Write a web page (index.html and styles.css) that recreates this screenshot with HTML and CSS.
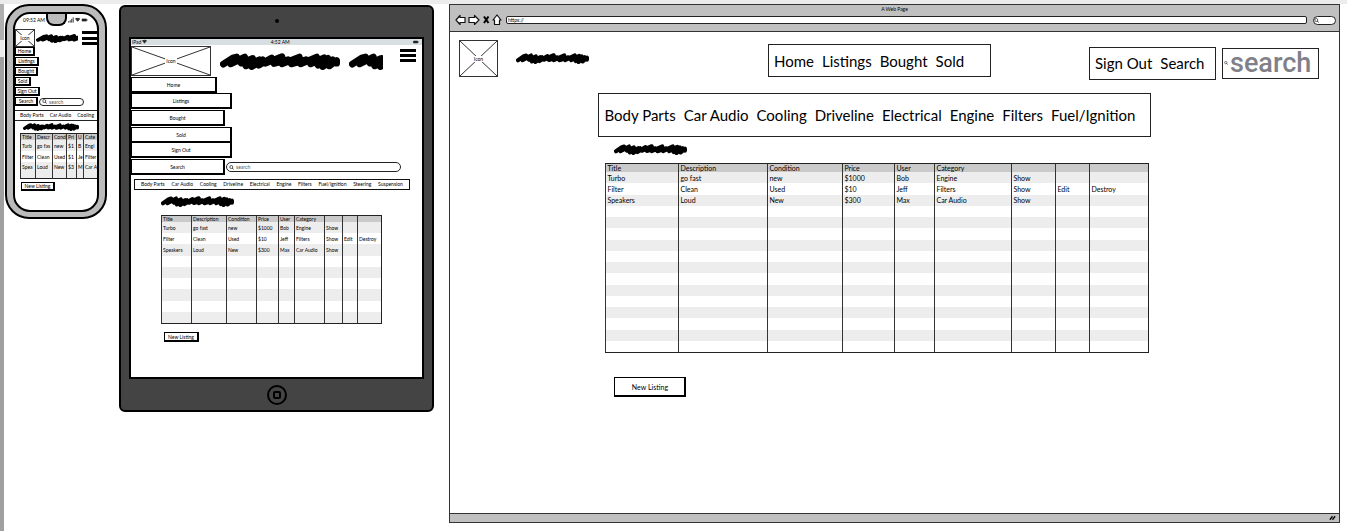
FILE: index.html
```html
<!DOCTYPE html>
<html lang="en">
<head>
<meta charset="utf-8">
<title>Car parts wireframes</title>
<link rel="stylesheet" href="styles.css">
</head>
<body>
<svg class="defs" aria-hidden="true">
  <symbol id="scribble" viewBox="0 0 360 50" preserveAspectRatio="none"><path d="M10 33 38 15 50 12 32 32 74 12 64 30 98 16 78 38 118 20 95 40 128 20 116 36 155 15 137 30 186 11 162 31 204 20 186 32 238 12 214 32 258 20 242 32 290 12 272 32 312 14 294 36 324 16 308 40 338 20 328 38 350 22 350 30" fill="none" stroke="#000" stroke-width="20" stroke-linecap="round" stroke-linejoin="round"/></symbol>
  <symbol id="cross" viewBox="0 0 100 100" preserveAspectRatio="none"><path d="M0 0 100 100M100 0 0 100" stroke="#333" stroke-width="1" vector-effect="non-scaling-stroke"/></symbol>
  <symbol id="lens" viewBox="0 0 10 10"><circle cx="4.500" cy="4" r="3" fill="#fff" stroke="#111" stroke-width="1.300"/><path d="M6.500 6 9 9" stroke="#111" stroke-width="1.600"/></symbol>
  <symbol id="wifi" viewBox="0 0 12 10"><path d="M0 3Q6-2 12 3L6 10Z" fill="#222"/><path d="M2 5Q6 2 10 5" fill="none" stroke="#ccc" stroke-width=".6"/></symbol>
  <symbol id="battery" viewBox="0 0 14 8"><rect x=".5" y="1" width="11" height="6" rx="1" fill="#222"/><path d="M12.500 3v2" stroke="#222" stroke-width="2"/></symbol>
</svg>

<div class="canvas">
  <section class="phone" aria-label="Phone">
    <div class="phone-screen">
      <div class="notch"></div>
      <div class="phone-status"><span>09:52 AM</span>
        <svg class="signals" viewBox="0 0 27 7"><path d="M1 7V5M3 7V4M5 7V2M7 7V0" stroke="#333" stroke-width="1.300"/><use href="#wifi" x="9" y="0" width="8" height="6"/><use href="#battery" x="18" y="1" width="9" height="5"/></svg>
      </div>
      <header class="phone-head">
        <div class="pic"><svg><use href="#cross"/></svg><span>Icon</span></div>
        <svg class="mark" viewBox="0 0 205 50" preserveAspectRatio="none"><use href="#scribble" width="360" height="50"/></svg>
        <button class="burger" aria-label="Menu"><i></i><i></i><i></i></button>
      </header>
      <nav class="phone-menu">
        <button class="btn w20">Home</button>
        <button class="btn w24">Listings</button>
        <button class="btn w23">Bought</button>
        <button class="btn w16">Sold</button>
        <button class="btn w25">Sign Out</button>
        <div class="find"><button class="btn w23">Search</button><label class="pill"><svg><use href="#lens"/></svg><input type="search" placeholder="search" aria-label="Search listings"></label></div>
      </nav>
      <nav class="phone-cats"><a href="#">Body Parts</a><a href="#">Car Audio</a><a href="#">Cooling</a></nav>
      <svg class="phone-scribble"><use href="#scribble"/></svg>
      <table class="grid phone-grid">
        <colgroup><col class="c15"><col class="c17"><col class="c14"><col class="c10"><col class="c7"><col></colgroup>
        <thead><tr><th>Title<th>Descr<th>Cond<th>Pri<th>U<th>Cate</thead>
        <tbody>
          <tr><td>Turb<td>go fas<td>new<td>$1<td>B<td>Engi
          <tr><td>Filter<td>Clean<td>Used<td>$1<td>Je<td>Filter
          <tr><td>Spea<td>Loud<td>New<td>$3<td>M<td>Car A
        </tbody>
      </table>
      <button class="btn phone-new">New Listing</button>
    </div>
  </section>

  <section class="tablet" aria-label="Tablet">
    <div class="camera"></div>
    <div class="tablet-screen">
      <div class="tablet-status"><span class="carrier">iPad <svg><use href="#wifi"/></svg></span><span>4:52 AM</span><svg class="power"><use href="#battery"/></svg></div>
      <header class="tablet-head">
        <div class="pic"><svg><use href="#cross"/></svg><span>Icon</span></div>
        <svg class="mark-long"><use href="#scribble"/></svg>
        <svg class="mark-cut" viewBox="0 0 103 50" preserveAspectRatio="none"><use href="#scribble" width="360" height="50"/></svg>
        <button class="burger" aria-label="Menu"><i></i><i></i><i></i></button>
      </header>
      <nav class="tablet-menu">
        <button class="btn w86">Home</button>
        <button class="btn w101">Listings</button>
        <button class="btn w94">Bought</button>
        <button class="btn w101">Sold</button>
        <button class="btn w101">Sign Out</button>
        <div class="find"><button class="btn w94">Search</button><label class="pill"><svg><use href="#lens"/></svg><input type="search" placeholder="search" aria-label="Search listings"></label></div>
      </nav>
      <nav class="tablet-cats"><a href="#">Body Parts</a><a href="#">Car Audio</a><a href="#">Cooling</a><a href="#">Driveline</a><a href="#">Electrical</a><a href="#">Engine</a><a href="#">Filters</a><a href="#">Fuel/Ignition</a><a href="#">Steering</a><a href="#">Suspension</a></nav>
      <div class="tablet-main">
        <svg class="scribble"><use href="#scribble"/></svg>
        <table class="grid tablet-grid">
          <colgroup><col class="c30"><col class="c35"><col class="c30"><col class="c22"><col class="c16"><col class="c30"><col class="c18"><col class="c15"><col></colgroup>
          <thead><tr><th>Title<th>Description<th>Condition<th>Price<th>User<th>Category<th><th><th></thead>
          <tbody>
            <tr><td>Turbo<td>go fast<td>new<td>$1000<td>Bob<td>Engine<td><a href="#">Show</a><td><td>
            <tr><td>Filter<td>Clean<td>Used<td>$10<td>Jeff<td>Filters<td><a href="#">Show</a><td><a href="#">Edit</a><td><a href="#">Destroy</a>
            <tr><td>Speakers<td>Loud<td>New<td>$300<td>Max<td>Car Audio<td><a href="#">Show</a><td><td>
            <tr><td><td><td><td><td><td><td><td><td>
            <tr><td><td><td><td><td><td><td><td><td>
            <tr><td><td><td><td><td><td><td><td><td>
            <tr><td><td><td><td><td><td><td><td><td>
            <tr><td><td><td><td><td><td><td><td><td>
            <tr><td><td><td><td><td><td><td><td><td>
          </tbody>
        </table>
        <button class="btn tablet-new">New Listing</button>
      </div>
    </div>
    <button class="home" aria-label="Home button"><i></i></button>
  </section>

  <section class="browser" aria-label="Browser">
    <div class="chrome">
      <div class="page-title">A Web Page</div>
      <div class="toolbar">
        <svg class="tools" viewBox="0 0 48 12"><g fill="#fff" stroke="#111" stroke-width="1.200" stroke-linejoin="round"><path d="M1 6 5 1.500V3.500H10V8.500H5V10.500Z"/><path d="M24 6 19.500 1.500V3.500H14V8.500H19.500V10.500Z"/><path d="M42 1 46 6H44.500V10.500H39.500V6H38Z"/></g><path d="M29 2.500 33.500 9M33.500 2.500 29 9" stroke="#000" stroke-width="2"/></svg>
        <input class="url" type="text" value="https://" aria-label="Address">
        <label class="pill"><svg><use href="#lens"/></svg><input type="search" aria-label="Web search"></label>
      </div>
    </div>
    <header class="site-head">
      <div class="brand">
        <div class="pic"><svg><use href="#cross"/></svg><span>Icon</span></div>
        <svg class="scribble"><use href="#scribble"/></svg>
      </div>
      <nav class="box main-nav"><a href="#">Home</a><a href="#">Listings</a><a href="#">Bought</a><a href="#">Sold</a></nav>
      <nav class="box account"><a href="#">Sign Out</a><a href="#">Search</a></nav>
      <label class="big-search"><svg><use href="#lens"/></svg><input type="search" placeholder="search" aria-label="Search listings"></label>
    </header>
    <main class="listings">
      <nav class="box cats"><a href="#">Body Parts</a><a href="#">Car Audio</a><a href="#">Cooling</a><a href="#">Driveline</a><a href="#">Electrical</a><a href="#">Engine</a><a href="#">Filters</a><a href="#">Fuel/Ignition</a></nav>
      <svg class="scribble"><use href="#scribble"/></svg>
      <table class="grid desk-grid">
        <colgroup><col class="d1"><col class="d2"><col class="d3"><col class="d4"><col class="d5"><col class="d6"><col class="d7"><col class="d8"><col></colgroup>
        <thead><tr><th>Title<th>Description<th>Condition<th>Price<th>User<th>Category<th><th><th></thead>
        <tbody>
          <tr><td>Turbo<td>go fast<td>new<td>$1000<td>Bob<td>Engine<td><a href="#">Show</a><td><td>
          <tr><td>Filter<td>Clean<td>Used<td>$10<td>Jeff<td>Filters<td><a href="#">Show</a><td><a href="#">Edit</a><td><a href="#">Destroy</a>
          <tr><td>Speakers<td>Loud<td>New<td>$300<td>Max<td>Car Audio<td><a href="#">Show</a><td><td>
          <tr><td><td><td><td><td><td><td><td><td>
          <tr><td><td><td><td><td><td><td><td><td>
          <tr><td><td><td><td><td><td><td><td><td>
          <tr><td><td><td><td><td><td><td><td><td>
          <tr><td><td><td><td><td><td><td><td><td>
          <tr><td><td><td><td><td><td><td><td><td>
          <tr><td><td><td><td><td><td><td><td><td>
          <tr><td><td><td><td><td><td><td><td><td>
          <tr><td><td><td><td><td><td><td><td><td>
          <tr><td><td><td><td><td><td><td><td><td>
          <tr><td><td><td><td><td><td><td><td><td>
          <tr><td><td><td><td><td><td><td><td><td>
          <tr><td><td><td><td><td><td><td><td><td>
        </tbody>
      </table>
      <button class="btn desk-new">New Listing</button>
    </main>
    <footer class="statusbar"><svg viewBox="0 0 8 6"><path d="M1 5 4 1M4 5 7 1" stroke="#000" stroke-width="1.500"/></svg></footer>
  </section>
</div>
</body>
</html>
```

FILE: styles.css
```css
* { box-sizing: border-box; }
body { margin: 0; background: #fff; color: #000; font-family: Lato, "Open Sans", sans-serif; }
a { color: inherit; text-decoration: none; white-space: nowrap; }
button, input { font: inherit; color: inherit; margin: 0; padding: 0; border: 0; background: none; }
input { min-width: 0; width: 100%; outline: 0; appearance: none; }
input::-webkit-search-cancel-button { display: none; }
input::placeholder { color: inherit; opacity: 1; }
i { display: block; }
svg { display: block; flex: none; }
.defs { position: absolute; width: 0; height: 0; }

.canvas {
  display: grid; align-items: start; min-height: 100vh;
  grid-template-columns: minmax(0, 102fr) 12px minmax(0, 315fr) 15px minmax(0, 891fr);
  padding: 0 7px 8px 5px;
  border-top: 4px solid #ececec;
  background: linear-gradient(#b0b0b0 36px, #ececec 36px, #ececec 53px, #a0a0a0 53px) left top / 4px 100% no-repeat;
}
.phone { grid-column: 1; }
.tablet { grid-column: 3; }
.browser { grid-column: 5; }

/* shared pieces */
.btn { display: block; border: 1px solid #000; border-right-width: 2px; border-bottom-width: 2px; background: #fff; text-align: center; white-space: nowrap; }
.pic { position: relative; flex: none; display: grid; place-items: center; border: 1px solid #333; background: #fff; font-size: 5px; line-height: 6px; }
.pic svg { position: absolute; inset: 0; width: 100%; height: 100%; }
.pic span { position: relative; background: #fff; padding: 0 1px; }
.burger { display: flex; flex-direction: column; justify-content: space-between; }
.burger i { width: 100%; height: 3px; background: #000; }
.find { display: flex; align-items: center; gap: 1px; }
.pill { display: flex; align-items: center; border: 1px solid #222; border-radius: 5px; background: #fff; color: #555; }
.pill svg { width: 5px; height: 5px; margin: 0 2px; }
.scribble { width: 73px; height: 11px; }

.grid { border-spacing: 0; table-layout: fixed; border: 1px solid #222; border-left: 0; }
.grid th, .grid td { padding: 0 0 0 1px; border-left: 1px solid #333; font-weight: 400; text-align: left; white-space: nowrap; overflow: hidden; }
.grid th { background: #cacaca; }
.grid tbody tr:nth-child(odd) { background: #ededed; }

/* phone */
.phone { border: 2px solid #000; border-radius: 24px; background: #bbb; padding: 6px 6px 5px; font-size: 5px; line-height: 6px; }
.phone-screen { position: relative; border: 2px solid #000; border-radius: 17px; background: #fff; overflow: hidden; min-height: 200px; }
.notch { position: absolute; top: -2px; left: 50%; margin-left: -10px; width: 21px; height: 14px; background: #bbb; border: 2px solid #000; border-top: 0; border-radius: 0 0 8px 8px; }
.phone-status { display: flex; justify-content: space-between; padding: 3px 9px 6px 8px; }
.signals { width: 20px; height: 6px; }
.phone-head { display: flex; align-items: center; height: 18px; }
.phone-head .pic { width: 20px; height: 18px; }
.phone-head .mark { width: 42px; height: 9px; margin: 0 4px 0 1px; }
.phone-head .burger { flex: 1; height: 14px; }
.phone-menu { display: grid; gap: 1px; justify-items: start; }
.phone-menu .btn { height: 9px; line-height: 6px; }
.phone-menu .pill { width: 45px; height: 8px; }
.w16 { width: 16px; } .w20 { width: 20px; } .w23 { width: 23px; } .w24 { width: 24px; } .w25 { width: 25px; }
.phone-cats { display: flex; justify-content: space-between; margin-top: 4px; padding: 0 3px 0 5px; border: solid #222; border-width: 1px 0; line-height: 9px; }
.phone-scribble { width: 56px; height: 8px; margin: 2px 0 2px 8px; }
.phone-grid { width: calc(100% - 5px); margin-left: 5px; border-right: 0; }
.phone-grid th { height: 6px; }
.phone-grid td { height: 11px; }
.phone-grid tbody tr:last-child td { height: 16px; vertical-align: top; line-height: 11px; }
.c7 { width: 7px; } .c10 { width: 10px; } .c14 { width: 14px; } .c15 { width: 15px; } .c17 { width: 17px; }
.phone-new { width: 34px; height: 9px; margin: 3px 0 0 6px; line-height: 6px; }

/* tablet */
.tablet { margin-top: 1px; border: 2px solid #000; border-radius: 6px; background: #444; padding: 0 8px; font-size: 5px; line-height: 6px; }
.camera { width: 4px; height: 4px; margin: 12px auto 14px; border-radius: 50%; background: #000; }
.tablet-screen { border: 2px solid #000; background: #fff; padding-bottom: 35px; }
.tablet-status { display: flex; justify-content: space-between; align-items: center; padding: 0 3px 0 1px; background: #d8dfe2; }
.carrier { display: flex; gap: 1px; }
.carrier svg { width: 5px; height: 5px; }
.power { width: 6px; height: 4px; }
.tablet-head { display: flex; align-items: center; height: 32px; padding-right: 6px; }
.tablet-head .pic { width: 80px; height: 30px; }
.mark-long { width: 120px; height: 17px; margin-left: 9px; }
.mark-cut { width: 34px; height: 17px; margin-left: 9px; }
.tablet-head .burger { width: 16px; height: 13px; margin: 0 0 12px auto; }
.tablet-menu { display: grid; grid-template-rows: 16px 17px 17px 15px 17px 16px; justify-items: start; align-items: start; }
.tablet-menu .btn { height: 16px; }
.tablet-menu .pill { width: 175px; height: 10px; }
.w86 { width: 86px; } .w94 { width: 94px; } .w101 { width: 101px; }
.tablet-cats { display: flex; justify-content: space-between; margin: 4px 12px 0 3px; padding: 0 6px; border: 1px solid #111; line-height: 9px; }
.tablet-main { padding: 6px 40px 0 30px; }
.tablet-grid { width: 100%; height: 109px; margin-top: 8px; }
.tablet-grid th { height: 6px; }
.tablet-grid td { height: 11px; }
.c16 { width: 16px; } .c18 { width: 18px; } .c22 { width: 22px; } .c30 { width: 30px; } .c35 { width: 35px; }
.tablet-new { width: 35px; height: 10px; margin: 8px 0 0 3px; line-height: 6px; }
.home { display: grid; place-items: center; width: 20px; height: 20px; margin: 6px auto 5px; border: 2px solid #000; border-radius: 50%; }
.home i { width: 8px; height: 8px; border: 2px solid #000; border-radius: 2px; }

/* browser */
.browser { align-self: stretch; display: flex; flex-direction: column; border: 1px solid #333; font-size: 7px; line-height: 8px; }
.chrome { background: #c0c0c0; border-bottom: 1px solid #333; padding-bottom: 5px; }
.page-title { text-align: center; font-size: 5px; line-height: 9px; }
.toolbar { display: flex; align-items: center; gap: 6px; padding: 0 3px 0 5px; }
.tools { width: 48px; height: 12px; }
.toolbar .url { flex: 1; height: 8px; margin-left: -3px; padding-left: 1px; border: 1px solid #222; border-radius: 2px; background: #fff; font-size: 5px; line-height: 6px; }
.toolbar .pill { width: 23px; height: 9px; }
.toolbar .pill svg { margin: 0; }
.box { display: flex; align-items: center; gap: 8px; padding: 0 6px; border: 1px solid #222; font-size: 15px; line-height: 18px; }
.site-head { display: flex; align-items: center; padding: 8px 20px 0 9px; }
.brand { display: flex; align-items: center; gap: 18px; padding-bottom: 6px; }
.brand .pic { width: 39px; height: 37px; }
.main-nav { width: 223px; height: 33px; margin: 0 0 2px auto; }
.account { width: 127px; height: 33px; margin: 3px 6px 0 11.4%; padding: 0 5px; }
.main-nav { padding: 0 5px; }
.big-search { display: flex; align-items: center; width: 97px; height: 31px; margin-top: 3px; padding: 0 2px 0 1px; border: 1px solid #222; color: #808088; font-family: Roboto, sans-serif; font-size: 27px; font-weight: 500; line-height: 28px; }
.big-search svg { width: 4px; height: 4px; margin-right: 2px; }
.listings { flex: 1; width: 62.2%; margin: 10px 0 0 16.7%; }
.cats { height: 44px; padding: 0 5px; }
.listings .scribble { margin: 7px 0 8px 16px; }
.desk-grid { width: calc(100% - 9px); height: 190px; margin-left: 7px; }
.desk-grid th { height: 8px; }
.desk-grid td { height: 11px; }
.d1 { width: 73px; } .d2 { width: 89px; } .d3 { width: 75px; } .d4 { width: 52px; } .d5 { width: 40px; } .d6 { width: 77px; } .d7 { width: 44px; } .d8 { width: 34px; }
.desk-new { width: 72px; height: 20px; margin: 24px 0 0 16px; }
.statusbar { display: flex; justify-content: flex-end; align-items: center; height: 9px; padding-right: 3px; border-top: 1px solid #333; background: #c0c0c0; }
.statusbar svg { width: 7px; height: 6px; }
```
